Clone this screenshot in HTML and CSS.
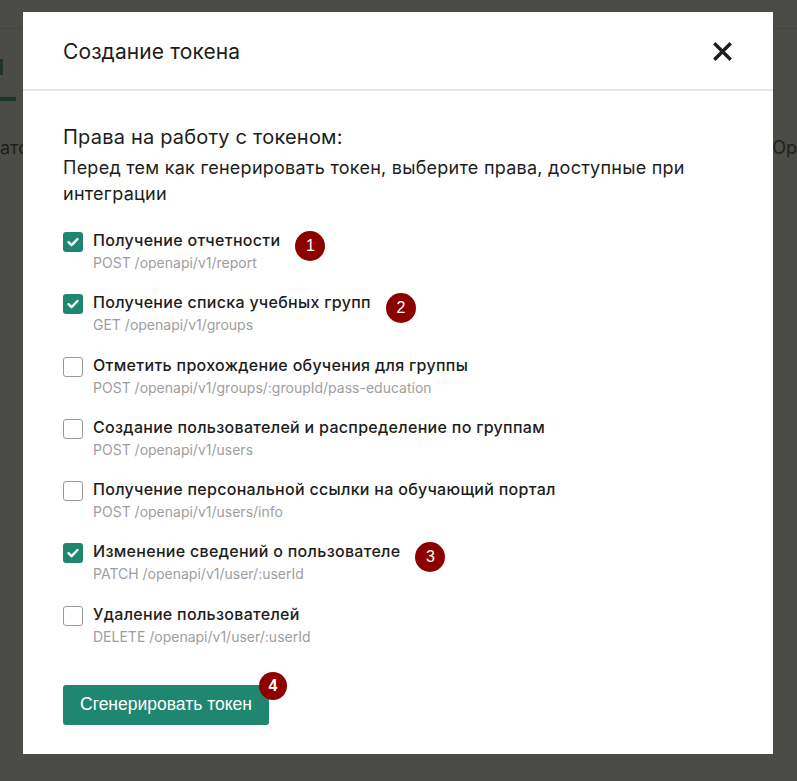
FILE: index.html
```html
<!DOCTYPE html>
<html lang="ru">
<head>
    <meta charset="UTF-8">
    <meta name="viewport" content="width=device-width, initial-scale=1.0">
    <title>Создание токена</title>
    <link rel="stylesheet" href="styles.css">
</head>
<body>
    <div class="page">
        <div class="page-header"></div>
        <div class="page-tabs">
            <span class="tab-icon"></span>
            <span class="tab-line"></span>
        </div>
        <div class="page-row">
            <span>атформа</span>
            <span>OpenAPI</span>
        </div>
    </div>

    <div class="overlay">
        <div class="modal">
            <div class="modal-header">
                <h1>Создание токена</h1>
                <button class="close" aria-label="Закрыть">
                    <svg width="19" height="19" viewBox="0 0 19 19">
                        <path d="M2.5 2.5 L16.5 16.5 M16.5 2.5 L2.5 16.5" stroke="#1d1d1b" stroke-width="3.4" stroke-linecap="square"/>
                    </svg>
                </button>
            </div>

            <div class="modal-body">
                <h2>Права на работу с токеном:</h2>
                <p class="lead">Перед тем как генерировать токен, выберите права, доступные при интеграции</p>

                <ul class="rights">
                    <li class="right">
                        <span class="box checked"></span>
                        <div>
                            <div class="right-title"><span class="mark">Получение отчетности<i class="badge">1</i></span></div>
                            <div class="right-path">POST /openapi/v1/report</div>
                        </div>
                    </li>
                    <li class="right">
                        <span class="box checked"></span>
                        <div>
                            <div class="right-title"><span class="mark">Получение списка учебных групп<i class="badge">2</i></span></div>
                            <div class="right-path">GET /openapi/v1/groups</div>
                        </div>
                    </li>
                    <li class="right">
                        <span class="box"></span>
                        <div>
                            <div class="right-title">Отметить прохождение обучения для группы</div>
                            <div class="right-path">POST /openapi/v1/groups/:groupId/pass-education</div>
                        </div>
                    </li>
                    <li class="right">
                        <span class="box"></span>
                        <div>
                            <div class="right-title">Создание пользователей и распределение по группам</div>
                            <div class="right-path">POST /openapi/v1/users</div>
                        </div>
                    </li>
                    <li class="right">
                        <span class="box"></span>
                        <div>
                            <div class="right-title">Получение персональной ссылки на обучающий портал</div>
                            <div class="right-path">POST /openapi/v1/users/info</div>
                        </div>
                    </li>
                    <li class="right">
                        <span class="box checked"></span>
                        <div>
                            <div class="right-title"><span class="mark">Изменение сведений о пользователе<i class="badge">3</i></span></div>
                            <div class="right-path">PATCH /openapi/v1/user/:userId</div>
                        </div>
                    </li>
                    <li class="right">
                        <span class="box"></span>
                        <div>
                            <div class="right-title">Удаление пользователей</div>
                            <div class="right-path">DELETE /openapi/v1/user/:userId</div>
                        </div>
                    </li>
                </ul>

                <button class="primary">Сгенерировать токен<i class="badge badge-btn">4</i></button>
            </div>
        </div>
    </div>
</body>
</html>
```

FILE: styles.css
```css
* {
    box-sizing: border-box;
}

body {
    margin: 0;
    font-family: Inter, "Noto Sans", sans-serif;
    background: #fffffb;
    color: #1d1d1b;
}

/* page under the dialog */
.page {
    height: 781px;
    overflow: hidden;
}

.page-header {
    height: 29px;
    border-bottom: 1px solid #dcdcdc;
}

.page-tabs {
    height: 74px;
    display: flex;
    flex-direction: column;
    justify-content: flex-end;
}

.tab-icon {
    width: 3px;
    height: 16px;
    background: #1f8770;
    margin-bottom: 22px;
}

.tab-line {
    display: block;
    width: 16px;
    height: 4px;
    background: #1f8770;
    margin-bottom: 2px;
}

.page-row {
    display: flex;
    justify-content: space-between;
    padding: 34px 0 0;
    font-size: 18px;
    color: #2a2a2a;
    margin-right: -50px;
}

/* dialog */
.overlay {
    position: fixed;
    inset: 0;
    background: rgba(30, 30, 26, 0.8);
    padding: 12px 0 0 23px;
}

.modal {
    width: 750px;
    height: 742px;
    background: #fff;
}

.modal-header {
    height: 79px;
    display: flex;
    align-items: center;
    justify-content: space-between;
    padding: 2px 41px 0 40px;
    border-bottom: 2px solid #e6e6e6;
}

.modal-header h1 {
    margin: 0;
    font-size: 21px;
    font-weight: 400;
    letter-spacing: 0.1px;
}

.close {
    border: 0;
    background: none;
    padding: 0;
    width: 19px;
    height: 19px;
    cursor: pointer;
}

.close svg {
    display: block;
}

.modal-body {
    padding: 33px 40px 0;
}

.modal-body h2 {
    margin: 0;
    font-size: 20px;
    font-weight: 400;
    line-height: 26px;
    letter-spacing: 0.2px;
}

.lead {
    margin: 5px 0 0;
    font-size: 18px;
    line-height: 26px;
    letter-spacing: 0.25px;
    max-width: 650px;
}

.rights {
    list-style: none;
    margin: 22px 0 0;
    padding: 0;
    display: flex;
    flex-direction: column;
    gap: 18.3px;
}

.right {
    display: flex;
    gap: 10px;
    align-items: flex-start;
}

.box {
    flex: none;
    width: 20px;
    height: 20px;
    margin-top: 3px;
    border: 1.5px solid #9a9a9a;
    border-radius: 3px;
}

.box.checked {
    border: 0;
    background: #1f8770 url("data:image/svg+xml,%3Csvg xmlns='http://www.w3.org/2000/svg' viewBox='0 0 20 20'%3E%3Cpath d='M5.5 10.2 L8.6 13.2 L14.5 7' fill='none' stroke='white' stroke-width='2.4' stroke-linecap='round' stroke-linejoin='round'/%3E%3C/svg%3E") center / 20px no-repeat;
}

.right-title {
    font-size: 16px;
    font-weight: 500;
    line-height: 22px;
    letter-spacing: 0.3px;
}

.right-path {
    font-size: 14px;
    color: #9e9e9e;
    line-height: 20px;
    margin-top: 2px;
}

.mark {
    position: relative;
}

/* numbered callouts */
.badge {
    position: absolute;
    left: 100%;
    top: 1px;
    margin-left: 15px;
    width: 30px;
    height: 30px;
    border-radius: 50%;
    background: #8c0000;
    color: #fff;
    font-style: normal;
    font-family: "Liberation Sans", Arial, sans-serif;
    font-size: 16px;
    font-weight: 400;
    line-height: 30px;
    text-align: center;
    letter-spacing: 0;
}

.primary {
    position: relative;
    margin-top: 38px;
    height: 40px;
    padding: 0 17px;
    border: 0;
    border-radius: 3px;
    background: #1f8770;
    color: #fff;
    font-family: "Liberation Sans", Arial, sans-serif;
    font-size: 17.5px;
    cursor: pointer;
}

.badge-btn {
    left: auto;
    right: -18px;
    top: -13px;
    margin: 0;
    width: 28px;
    height: 28px;
    line-height: 28px;
    font-size: 16px;
    font-weight: 700;
}
```
